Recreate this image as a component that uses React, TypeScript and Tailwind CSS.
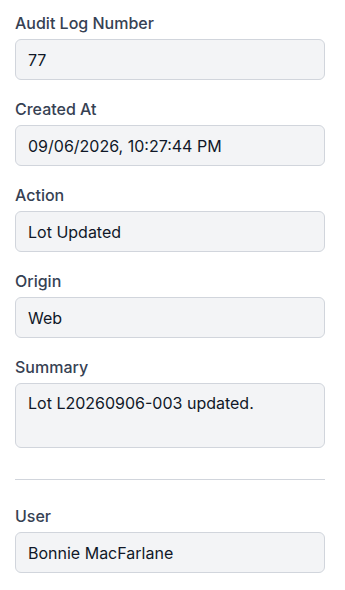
const fields = [
  { label: 'Audit Log Number', value: '77' },
  { label: 'Created At', value: '09/06/2026, 10:27:44 PM' },
  { label: 'Action', value: 'Lot Updated' },
  { label: 'Origin', value: 'Web' },
];

const Field = ({ label, value }: { label: string; value: string }) => (
  <div>
    <label className="block text-base leading-6 font-medium text-gray-700 mb-[4px]">{label}</label>
    <input
      readOnly
      value={value}
      className="block w-full h-[41px] rounded-md border border-gray-300 bg-gray-100 px-3 text-base text-gray-900 outline-none"
    />
  </div>
);

export default function App() {
  return (
    <div className="min-h-screen bg-white pl-[15px] pr-[20px] pt-[11px] font-['Inter',sans-serif]">
      <div className="flex flex-col gap-[17px]">
        {fields.map((f) => (
          <Field key={f.label} label={f.label} value={f.value} />
        ))}
        <div>
          <label className="block text-base leading-6 font-medium text-gray-700 mb-[4px]">Summary</label>
          <textarea
            readOnly
            rows={2}
            value="Lot L20260906-003 updated."
            className="block w-full h-[65px] resize-none rounded-md border border-gray-300 bg-gray-100 px-3 py-[7px] text-base leading-6 text-gray-900 outline-none"
          />
        </div>
      </div>
      <hr className="mt-[31px] mb-[24px] border-gray-300" />
      <Field label="User" value="Bonnie MacFarlane" />
    </div>
  );
}
